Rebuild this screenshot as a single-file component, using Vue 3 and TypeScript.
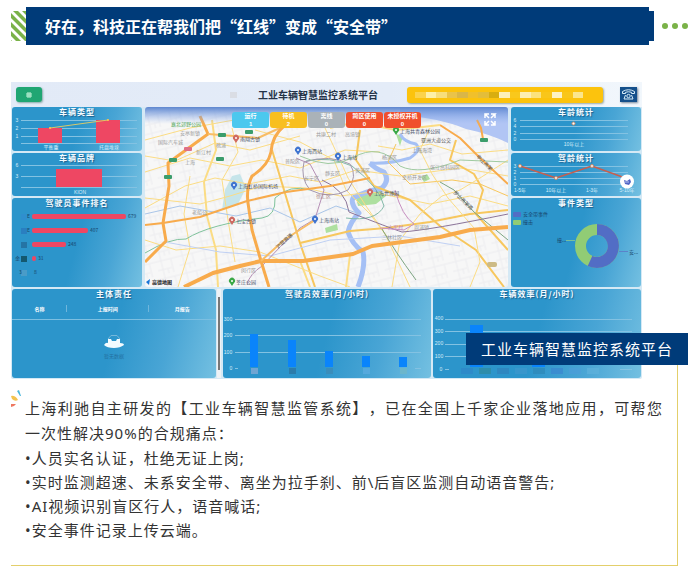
<script setup lang="ts">
interface Road { d: string; c: string; w: number }
interface Place { x: number; y: number; t: string; c: string }
interface Bar { x: number; y: number; w: number; h: number }

const statuses = [
  { name: '运行', count: 1, tone: 'run' },
  { name: '待机', count: 2, tone: 'idle' },
  { name: '离线', count: 0, tone: 'off' },
  { name: '跨区使用', count: 0, tone: 'alert' },
  { name: '未授权开机', count: 0, tone: 'alert' },
]

const masks = ['#fbd34c', '#fdf0a8', '#f7de7c', '#e9c34a', '#d9b648', '#f0c02c', '#e3bd3a', '#d8ae10', '#fdf0b8', '#f9c81c', '#fdeeb0', '#fbe27c', '#f9c61a', '#fdf2c4', '#f9c61a', '#fbe68c']

const ranking = [
  { y: 216, w: 94, v: '679', m: '#2f8fce' },
  { y: 230, w: 56, v: '407', m: '#2a7fc0' },
  { y: 244, w: 34, v: '248', m: '#2574a5' },
  { y: 258, w: 4, v: '31', m: '#14586f' },
  { y: 272, w: 0, v: '8', m: '#4a9cc8' },
]

const driverBars: Bar[] = [
  { x: 250, y: 334, w: 8, h: 33 },
  { x: 288, y: 340, w: 8, h: 27 },
  { x: 325, y: 351, w: 8, h: 16 },
  { x: 362, y: 356, w: 8, h: 11 },
  { x: 399, y: 357, w: 8, h: 10 },
]
const driverMasks = ['#6fa5d3', '#2c7cab', '#3a8dbb', '#55a9dd', '#6cb6cc']
const vehicleMasks = ['#2e86c8', '#2f8a9c', '#3182ba', '#3d97cc', '#2e88b8', '#3a86d0', '#4b9cd8', '#5eb0dc']

const stripes = [-16, -7, 2, 11, 20, 29]

const minor = '#fbdc84'
const major = '#f8ab4c'
const roads: Road[] = [
  { d: 'M145 140L190 128L245 118', c: minor, w: 1 },
  { d: 'M145 156L175 161L215 143L250 150L300 136', c: minor, w: 1 },
  { d: 'M145 172L190 158L230 166L262 160L300 168L345 150L380 152', c: minor, w: 1 },
  { d: 'M145 208L185 186L215 178L248 184L290 176L320 182L356 170L400 176L460 168L508 176', c: minor, w: 1 },
  { d: 'M145 198L200 204L230 196L262 186L306 188L340 196L372 192L430 204L470 196L508 206', c: minor, w: 1 },
  { d: 'M212 120L216 150L204 182L207 216L216 250L218 287', c: minor, w: 2 },
  { d: 'M232 128L238 152L222 180L228 220L235 262', c: minor, w: 1 },
  { d: 'M255 130L300 142L334 160L346 190L370 214L385 234L410 287', c: minor, w: 1 },
  { d: 'M272 150L284 190L300 243L315 287', c: '#f7c75e', w: 2 },
  { d: 'M300 243L350 231L386 228L430 222L470 214L508 210', c: '#f7c75e', w: 2 },
  { d: 'M325 128L340 160L348 178L366 206L388 238', c: minor, w: 1 },
  { d: 'M360 130L356 160L374 186L410 200L440 226L476 250L504 287', c: '#f7c75e', w: 2 },
  { d: 'M378 146L402 150L430 144L462 154L508 150', c: minor, w: 1 },
  { d: 'M396 144L388 162L410 184L452 180L480 184L508 196', c: '#f7c75e', w: 1 },
  { d: 'M430 128L420 150L432 174L448 198L474 228L480 262L470 287', c: minor, w: 1 },
  { d: 'M456 140L450 160L474 174L483 190L476 214L508 250', c: '#f7c75e', w: 2 },
  { d: 'M508 160L480 178L460 190L442 196L420 214L400 240L392 287', c: minor, w: 1 },
  { d: 'M145 240L176 250L220 246L260 252L320 276L350 287', c: minor, w: 1 },
  { d: 'M178 287L190 248L184 214L190 176', c: minor, w: 1 },
  { d: 'M350 255L346 287M300 261L310 287', c: minor, w: 2 },
  { d: 'M145 253Q170 238 186 239Q210 224 262 218Q276 216 275 198Q290 184 310 190', c: '#7fc29b', w: 1 },
  { d: 'M145 214L180 206L236 216L270 208L300 222L336 206L360 214', c: '#a9c5e8', w: 1 },
  { d: 'M165 242L220 252L270 256L330 240L400 236L460 246', c: '#bfd0f3', w: 1 },
  { d: 'M247 284Q250 274 262 266Q280 246 300 228L315 219L324 190L310 164L296 158', c: '#b58fb5', w: 1 },
  { d: 'M306 161Q330 156 352 166Q380 188 384 206Q376 222 346 218', c: '#83b9a8', w: 1 },
  { d: 'M322 180Q346 190 349 212Q390 228 402 232Q430 230 508 214', c: '#8c7599', w: 1 },
  { d: 'M395 190Q402 216 414 224L404 230L380 228', c: '#c78fc1', w: 1 },
  { d: 'M304 162Q300 178 310 190Q330 200 348 190Q358 176 350 164Q330 154 304 162', c: '#a397ad', w: 1 },
  { d: 'M300 156Q330 170 352 158Q380 142 400 166Q420 176 460 160L508 162', c: '#9fcaa0', w: 1 },
  { d: 'M440 182L454 190L474 212L508 240M382 229Q394 250 416 280', c: '#7da582', w: 1 },
  { d: 'M200 116L208 134L168 163L169 186L163 223L166 241L145 262', c: major, w: 3 },
  { d: 'M208 134L258 138L282 127', c: '#f8bd66', w: 2 },
  { d: 'M284 126Q272 136 271 152Q268 166 252 176Q246 188 248 203L252 230L261 261L269 287', c: major, w: 3 },
  { d: 'M145 225L163 223L200 217L247 201L286 192L330 186L370 178', c: major, w: 2 },
  { d: 'M184 287L213 273L240 266L261 261L303 261L353 254L372 246L440 237L470 230L508 227', c: major, w: 4 },
  { d: 'M261 261L284 240L315 220', c: '#f8bd66', w: 2 },
  { d: 'M477 120L481 128L483 139M440 125L460 138L480 158L508 184', c: major, w: 2 },
  { d: 'M330 128L356 122L396 130L440 125', c: minor, w: 2 },
]

const areas: Place[] = [
  { x: 180, y: 135, t: '安亭新镇', c: '#999' },
  { x: 158, y: 144, t: '国际汽车城', c: '#999' },
  { x: 216, y: 147, t: '桃浦', c: '#999' },
  { x: 196, y: 154, t: '新江村', c: '#999' },
  { x: 185, y: 164, t: '上海', c: '#999' },
  { x: 316, y: 136, t: '共康二村', c: '#999' },
  { x: 345, y: 136, t: '高境镇', c: '#999' },
  { x: 285, y: 163, t: '普陀区', c: '#999' },
  { x: 382, y: 159, t: '杨浦区', c: '#999' },
  { x: 325, y: 175, t: '静安区', c: '#999' },
  { x: 304, y: 180, t: '长宁区', c: '#999' },
  { x: 355, y: 172, t: '黄浦区', c: '#999' },
  { x: 402, y: 179, t: '金桥开发区', c: '#999' },
  { x: 430, y: 169, t: '张江高科园区', c: '#999' },
  { x: 412, y: 152, t: '上海海湾', c: '#888' },
  { x: 421, y: 142, t: '亚洲大道公交', c: '#555' },
  { x: 316, y: 198, t: '徐汇区', c: '#a88' },
  { x: 192, y: 214, t: '老船公', c: '#999' },
  { x: 382, y: 239, t: '三林社区', c: '#999' },
  { x: 388, y: 229, t: '六里村', c: '#c48ac0' },
  { x: 414, y: 229, t: '周浦镇', c: '#999' },
  { x: 241, y: 272, t: '闵行区', c: '#999' },
]
const pins: Place[] = [
  { x: 236, y: 139, t: '南翔古镇', c: '#cf6a62' },
  { x: 298, y: 151, t: '上海西站', c: '#3f74d0' },
  { x: 338, y: 157, t: '上海站', c: '#3f74d0' },
  { x: 396, y: 131, t: '上海共青森林公园', c: '#39a845' },
  { x: 234, y: 186, t: '上海虹桥国际机场', c: '#3f74d0' },
  { x: 370, y: 193, t: '上海世博园', c: '#cf6a62' },
  { x: 232, y: 221, t: '七宝古镇', c: '#cf6a62' },
  { x: 315, y: 220, t: '上海南站', c: '#3f74d0' },
  { x: 232, y: 282, t: '莘庄公园', c: '#39a845' },
]
const shields: [number, number][] = [[222, 135], [173, 160], [220, 159], [168, 177], [249, 132], [484, 140]]

const points = [
  '人员实名认证，杜绝无证上岗;',
  '实时监测超速、未系安全带、离坐为拉手刹、前\\后盲区监测自动语音警告;',
  'AI视频识别盲区行人，语音喊话;',
  '安全事件记录上传云端。',
]
</script>

<template>
  <main class="page">
    <header class="banner">
      <svg class="hatch" viewBox="0 0 15 30" aria-hidden="true">
        <path v-for="k in stripes" :key="k" :d="`M0 ${k}L15 ${k + 15}V${k + 20}L0 ${k + 5}Z`" fill="#7ab248" />
      </svg>
      <h1>好在，科技正在帮我们把“红线”变成“安全带”</h1>
      <span class="tab"></span>
      <span class="dots"><i></i><i></i><i></i></span>
    </header>

    <figure class="shot">
      <div class="board">
        <div class="topbar">
          <div class="tools">
            <button type="button" class="menu" aria-label="菜单">
              <svg viewBox="0 0 8 8"><path d="M2 2H6V6H2ZM2 4H6M4 2V6" fill="none" stroke="#c4f3da" /></svg>
            </button>
            <span class="smudge"></span>
          </div>
          <h2>工业车辆智慧监控系统平台</h2>
          <div class="notice"><i v-for="(m, i) in masks" :key="i" :style="{ background: m }"></i></div>
          <button type="button" class="phone" aria-label="电话">
            <svg viewBox="0 0 17 15" fill="none" stroke="#d8edf8">
              <path d="M2.500 6.500V4.500Q8.500 1 14.500 4.500V6.500H11.500V5.300Q8.500 4.200 5.500 5.300V6.500Z" />
              <path d="M5.500 8L4 12H13L11.500 8" /><circle cx="8.500" cy="9" r="1.700" />
            </svg>
          </button>
        </div>

        <div class="middle">
          <div class="stack">
            <section class="panel">
              <h3>车辆类型</h3>
              <svg viewBox="12 116 130 35">
                <path class="grid" d="M21 120.500H137M21 128.500H137M21 136.500H137M21 143.500H137" />
                <path fill="#ee4763" d="M38 128H62V143H38ZM96 120H120V143H96Z" />
                <path d="M50 128L108 120" stroke="#d8c86a" fill="none" />
                <circle cx="50" cy="128" r="1" fill="#ffc94a" /><circle cx="108" cy="120" r="1" fill="#ffc94a" />
                <g class="tick"><text x="17" y="122">3</text><text x="17" y="130">2</text><text x="17" y="138">1</text>
                  <text x="51" y="149">平衡重</text><text x="109" y="149">托盘堆垛</text></g>
              </svg>
            </section>
            <section class="panel">
              <h3>车辆品牌</h3>
              <svg viewBox="12 162 130 34">
                <path class="grid" d="M21 165.500H137M21 176.500H137M21 187.500H137" />
                <rect x="56" y="169" width="46" height="18" fill="#ee4763" />
                <g class="tick"><text x="17" y="167">6</text><text x="17" y="178">3</text><text x="80" y="194">KION</text></g>
              </svg>
            </section>
            <section class="panel">
              <h3>驾驶员事件排名</h3>
              <svg viewBox="12 207 130 80">
                <g v-for="r in ranking" :key="r.v">
                  <rect x="21" :y="r.y - 2" width="6" height="6" :fill="r.m" />
                  <rect x="32" :y="r.y - 2" :width="r.w" height="5" rx="2" fill="#ee4763" />
                  <text class="value" :x="r.w + 34" :y="r.y + 2">{{ r.v }}</text>
                </g>
                <text class="value" x="27" y="218">E</text><text class="value" x="27" y="232">E</text>
                <text class="value" x="15" y="260">金</text><text class="value" x="19" y="274">3</text>
              </svg>
            </section>
          </div>

          <div class="map">
            <svg viewBox="145 107 363 180" preserveAspectRatio="xMidYMid slice">
              <defs>
                <linearGradient id="sky" x1="0" y1="0" x2="0" y2="1">
                  <stop offset="0" stop-color="#5d86cf" /><stop offset="1" stop-color="#8fb1ee" stop-opacity="0" />
                </linearGradient>
                <pattern id="streets" width="22" height="18" patternUnits="userSpaceOnUse" patternTransform="rotate(-14)">
                  <path d="M0 4H22M0 13H14M5 0V18M15 4V18M10 13V18" fill="none" stroke="#ececef" />
                </pattern>
              </defs>
              <rect x="145" y="107" width="363" height="180" fill="#f7f7f7" />
              <rect x="145" y="107" width="363" height="180" fill="url(#streets)" />
              <path fill="#b1c5f4" d="M400 107H508V143Q490 134 466 129Q440 118 400 115Z" />
              <path fill="#c6e5ea" d="M232 176L240 174L246 188L238 204L222 210L225 190Z" />
              <path fill="#aee0a0" d="M356 198L376 188L386 196L376 204L358 206ZM325 228L337 224L338 230L326 233ZM421 177L427 174L430 179L424 182ZM396 134L403 136L400 146Z" />
              <path d="M400 134Q404 142 416 144Q422 150 410 158Q390 164 370 163" fill="none" stroke="#a5c0f5" stroke-width="3" stroke-linejoin="round" />
              <path d="M370 163Q374 168 384 172Q390 180 382 188Q364 192 353 198Q350 204 359 213Q350 222 348 232Q352 244 363 252Q366 266 358 287" fill="none" stroke="#a5c0f5" stroke-width="5" stroke-linejoin="round" />
              <path v-for="(r, i) in roads" :key="i" :d="r.d" :stroke="r.c" :stroke-width="r.w" fill="none" stroke-linejoin="round" />
              <rect v-for="s in shields" :key="s.join()" :x="s[0] - 4" :y="s[1] - 2" width="8" height="4" rx="1" fill="#3b9d6c" />
              <rect x="184" y="147" width="8" height="4" rx="1" fill="#e07084" />
              <rect x="487" y="262" width="10" height="5" rx="2" fill="#cdbb86" />
              <text v-for="a in areas" :key="a.t" :x="a.x" :y="a.y" :fill="a.c" class="place">{{ a.t }}</text>
              <text x="171" y="126" class="place" fill="#53a95b">嘉北郊野公园</text>
              <text x="278" y="249" class="place" fill="#555" transform="rotate(-42 278 249)">沪昆高速</text>
              <text x="453" y="193" class="place" fill="#555" transform="rotate(44 453 193)">罗山高架路</text>
              <text x="476" y="157" class="place" fill="#555" transform="rotate(44 476 157)">申江高架</text>
              <g v-for="p in pins" :key="p.t">
                <path :transform="`translate(${p.x} ${p.y})`" d="M0 4L-2 1A3 3 0 1 1 2 1Z" :fill="p.c" />
                <circle :cx="p.x" :cy="p.y - 1" r="1" fill="#fff" />
                <text :x="p.x + 4" :y="p.y + 2" class="place" fill="#47526b">{{ p.t }}</text>
              </g>
              <path d="M146 282L150 279L149 285Z" fill="#1975d8" />
              <text x="152" y="284" class="brand">高德地图</text>
              <rect x="145" y="107" width="363" height="17" fill="url(#sky)" />
              <path d="M485 118V114H489M485 114L489 118M491 118L495 114H491M495 114V118M485 121V125H489M485 125L489 121M495 121V125H491M495 125L491 121" fill="none" stroke="#fff" stroke-width="1.500" />
            </svg>
            <ul class="chips">
              <li v-for="s in statuses" :key="s.name" :class="s.tone"><span>{{ s.name }}</span><span class="count">{{ s.count }}</span></li>
            </ul>
          </div>

          <div class="stack">
            <section class="panel">
              <h3>车龄统计</h3>
              <svg viewBox="511 116 130 35">
                <path class="grid" d="M520 120.500H628M520 126.500H628M520 133.500H628M520 139.500H628" />
                <circle cx="573.500" cy="123.500" r="1.500" fill="#fff" stroke="#c98a68" />
                <g class="tick"><text x="515" y="122">6</text><text x="515" y="128">4</text><text x="515" y="135">2</text><text x="515" y="141">0</text>
                  <text x="574" y="146">10年以上</text></g>
              </svg>
            </section>
            <section class="panel">
              <h3>驾龄统计</h3>
              <svg viewBox="511 162 130 34">
                <path class="grid" d="M520 166.500H628M520 172.500H628M520 178.500H628M520 184.500H628" />
                <path d="M520 166L556 178L592 166L628 179" fill="none" stroke="#c85e4e" stroke-width="1.500" />
                <g fill="#fff" stroke="#c98a68"><circle cx="520" cy="166" r="1.500" /><circle cx="556" cy="178" r="1.500" /><circle cx="592" cy="166" r="1.500" /></g>
                <g class="tick"><text x="515" y="168">3</text><text x="515" y="174">2</text><text x="515" y="180">1</text><text x="515" y="186">0</text>
                  <text x="520" y="192">1-5年</text><text x="556" y="192">10年以上</text><text x="592" y="192">1-3年</text><text x="627" y="192">5-10年</text></g>
                <circle cx="627" cy="181.500" r="7" fill="#fff" />
                <path d="M624 180L627 181L630 179L631 182L629 185L625 184Z" fill="#5165c5" />
                <path d="M625 182H629" stroke="#b8c2f0" />
              </svg>
            </section>
            <section class="panel">
              <h3>事件类型</h3>
              <svg viewBox="511 207 130 80">
                <rect x="513" y="212" width="8" height="5" rx="1" fill="#526dc5" />
                <rect x="513" y="220" width="8" height="5" rx="1" fill="#91cc75" />
                <text x="523" y="216" class="value">安全带事件</text><text x="523" y="224" class="value">撞击</text>
                <circle cx="597" cy="246" r="16.500" fill="none" stroke="#91cc75" stroke-width="11" />
                <path d="M597 229.500A16.500 16.500 0 1 1 590 261" fill="none" stroke="#526dc5" stroke-width="11" />
                <path d="M566 240.500H575" stroke="#78bf9c" /><path d="M619 251.500H628" stroke="#5b83c9" />
                <text x="557" y="242" class="value">撞...</text><text x="629" y="254" class="value">安...</text>
              </svg>
            </section>
          </div>
        </div>

        <div class="bottom">
          <div class="scroller">
            <section class="panel">
              <h3>主体责任</h3>
              <table>
                <thead><tr><th>名称</th><th>上报时间</th><th>月报告</th></tr></thead>
              </table>
              <div class="empty">
                <svg viewBox="0 0 20 13"><path d="M0 10Q2 7 4 8V4H7L8 6H12L13 4H16V8Q20 8 20 10Q16 13 10 13Q3 13 0 10Z" fill="#f3fbff" /><path d="M4 4L7 0.500H13L16 4" fill="none" stroke="#75b8db" /></svg>
                <span>暂无数据</span>
              </div>
            </section>
            <span class="rail"></span>
          </div>
          <section class="panel">
            <h3>驾驶员效率(月/小时)</h3>
            <svg viewBox="223 298 208 80">
              <path class="grid" d="M235 319.500H421M235 335.500H421M235 352.500H421M235 368.500H238M415 368.500H421" />
              <rect v-for="b in driverBars" :key="b.x" :x="b.x" :y="b.y" :width="b.w" :height="b.h" fill="#0a84fb" />
              <rect v-for="(m, i) in driverMasks" :key="m" :x="driverBars[i].x + 1" y="368" width="7" height="6" :fill="m" />
              <g class="tick"><text x="228" y="321">300</text><text x="228" y="337">200</text><text x="228" y="354">100</text><text x="231" y="370">0</text></g>
            </svg>
          </section>
          <section class="panel">
            <h3>车辆效率(月/小时)</h3>
            <svg viewBox="433 298 208 80">
              <path class="grid" d="M445 319.500H632M445 331.500H632M445 344.500H632M445 356.500H632M445 369.500H449M620 369.500H632" />
              <path fill="#0a84fb" d="M470 325H483V367H470ZM532 360H545V367H532Z" />
              <rect v-for="(m, i) in vehicleMasks" :key="m" :x="461 + i * 18" y="368" width="12" height="6" :fill="m" opacity="0.700" />
              <g class="tick"><text x="439" y="320">400</text><text x="439" y="333">300</text><text x="439" y="345">200</text><text x="439" y="358">100</text><text x="441" y="371">0</text></g>
            </svg>
          </section>
        </div>
      </div>
      <figcaption>工业车辆智慧监控系统平台</figcaption>
    </figure>

    <article class="story">
      <svg class="spark" viewBox="0 0 11 18" aria-hidden="true">
        <path d="M6 1L8 0L10 6H9Z" fill="#4bb8dc" />
        <path d="M0 6Q4 5 7 10Q4 12 1 9Z" fill="#f3c34f" />
        <path d="M0 14L5 14L3 16L0 17Z" fill="#ee7860" />
      </svg>
      <p>上海利驰自主研发的【工业车辆智慧监管系统】，已在全国上千家企业落地应用，可帮您一次性解决90%的合规痛点：</p>
      <ul>
        <li v-for="p in points" :key="p">•{{ p }}</li>
      </ul>
    </article>
  </main>
</template>

<style>
body { margin: 0; background: #fff; }
</style>

<style scoped>
* { box-sizing: border-box; }
.page { padding: 7px 6px 8px 11px; color: #333; font-family: "Noto Sans", "Noto Sans CJK SC", sans-serif; text-spacing-trim: space-all; }
h1, h2, h3, ul, p, figure { margin: 0; padding: 0; }
ul { list-style: none; }
svg { display: block; }

.banner { display: flex; align-items: center; }
.hatch { width: 15px; height: 30px; overflow: hidden; }
.banner h1 { flex: 1; padding-left: 19px; background: #003b79; color: #fff; font: bold 16px/38px "Noto Sans CJK SC", sans-serif; white-space: nowrap; }
.tab { width: 5px; height: 30px; background: #003b79; }
.dots { display: flex; gap: 4px; padding-left: 8px; }
.dots i { width: 6px; height: 6px; border-radius: 50%; background: #7ab248; }

.shot { position: relative; margin: 37px 46px 0 0; }
.board { padding-bottom: 1px; background: #d5e9f5; font-family: "Noto Sans CJK SC", sans-serif; border-radius: 2px; }
.topbar { display: grid; grid-template-columns: 242fr 130fr 24fr 196fr 39fr; align-items: center; height: 25px; background: linear-gradient(90deg, #e2eaf7, #e4ecf8 60%, #f2f7fc); }
.tools { display: flex; justify-content: space-between; align-items: center; padding: 0 16px 0 5px; }
.menu { display: grid; place-items: center; width: 26px; height: 15px; padding: 0; border: 0; border-radius: 3px; background: #20a673; box-shadow: 1px 1px 2px #8aa; }
.menu svg { width: 8px; height: 8px; }
.smudge { width: 7px; height: 6px; background: #dadde4; }
.topbar h2 { color: #253347; font-size: 10px; line-height: 24px; text-align: center; white-space: nowrap; }
.notice { grid-column: 4; display: flex; justify-content: center; align-items: center; height: 16px; border-radius: 3px; background: #fcc30d; box-shadow: 1px 1px 2px #9aa; padding: 0 20px 0 8px; }
.notice i { flex: 1; height: 6px; }
.phone { width: 17px; height: 15px; margin-left: 17px; padding: 0; border: 0; background: #15508b; box-shadow: 1px 1px 2px #789; }

.middle { display: grid; grid-template-columns: 130fr 363fr 130fr; gap: 3px; padding: 0 1px; }
.stack { display: flex; flex-direction: column; gap: 2px; }
.panel { overflow: hidden; border-radius: 3px; background: linear-gradient(105deg, #2c95cb 50%, #49a5d5 75%, #74c0e1); }
.panel > svg { width: 100%; }
.panel h3 { color: #f4fbff; font-size: 8px; line-height: 9px; letter-spacing: 1px; text-align: center; text-shadow: 1px 1px 1px #1d5f8c; white-space: nowrap; }
.grid { fill: none; stroke: #83c2e2; }
.tick { fill: #d7eef9; font-family: "Liberation Sans", "Noto Sans CJK SC", sans-serif; font-size: 5px; text-anchor: middle; }
.value { fill: #17446a; font-size: 5px; }

.map { position: relative; overflow: hidden; border-radius: 3px; }
.map > svg { width: 100%; height: 100%; }
.place { font-size: 5px; }
.brand { fill: #222; font-size: 5px; font-weight: bold; }
.chips { position: absolute; top: 5px; left: 24%; display: flex; gap: 1px; width: 52%; }
.chips li { flex: 1; display: flex; flex-direction: column; align-items: center; height: 16px; border-radius: 3px; color: #fff; font-size: 6px; font-weight: bold; line-height: 8px; white-space: nowrap; }
.chips .count { font-family: "Liberation Sans", sans-serif; }
.run { background: #4cc8ee; }
.idle { background: #f8bf20; }
.off { background: #aab2b8; }
.alert { background: #f04f2c; }

.bottom { display: grid; grid-template-columns: 209fr 208fr 208fr; gap: 2px; padding: 2px 1px 0; }
.scroller { display: flex; gap: 1px; }
.scroller .panel { flex: 1; }
.rail { width: 4px; border: solid #eef2f5; border-width: 8px 1px; background: #777; }
table { width: 100%; border-collapse: collapse; border-bottom: 1px solid #7cbfe1; }
th { height: 21px; padding: 0; color: #fff; font-size: 5px; line-height: 7px; background: linear-gradient(#6fb6dc, #6fb6dc) right center / 1px 7px no-repeat; }
th:nth-child(1) { width: 27%; }
th:nth-child(2) { width: 40%; }
th:last-child { background: none; }
.empty { display: flex; flex-direction: column; align-items: center; gap: 4px; padding-top: 15px; color: #2472a3; font-size: 5px; line-height: 7px; }
.empty svg { width: 20px; height: 13px; }

figcaption { position: absolute; z-index: 1; right: -46px; bottom: 14px; padding: 0 15px; background: #003b79; color: #fff; font-size: 15px; line-height: 32px; letter-spacing: 1px; white-space: nowrap; }

.story { position: relative; margin: -20px 10px 0 0; padding: 37px 14px 23px; border: solid #e3cf6b; border-width: 0 1px 1px 0; font-size: 15px; line-height: 25px; letter-spacing: 1px; }
.story p { text-align: justify; }
.story li { line-height: 24px; }
.spark { position: absolute; left: 0; top: 31px; width: 11px; height: 18px; }
</style>
